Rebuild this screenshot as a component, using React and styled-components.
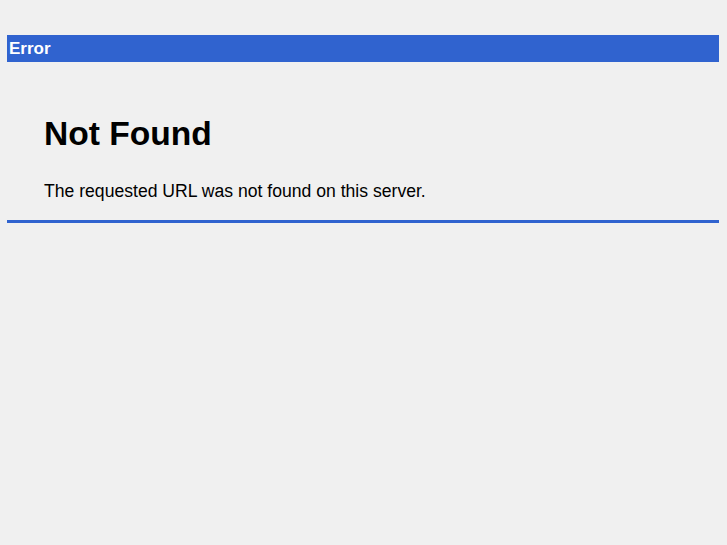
import React from 'react';
import styled, { createGlobalStyle } from 'styled-components';

const GlobalStyle = createGlobalStyle`
  html, body {
    margin: 0;
    padding: 0;
    background: #f0f0f0;
  }
  body {
    font-family: "Liberation Sans", Arial, sans-serif;
    color: #000;
  }
`;

const Page = styled.div`
  padding: 35px 8px 0 7px;
`;

const TitleBar = styled.div`
  height: 27px;
  background: #3063cf;
  color: #fff;
  font-size: 17px;
  font-weight: bold;
  line-height: 27px;
  padding-left: 2px;
`;

const Content = styled.div`
  padding: 0 0 0 37px;
`;

const Heading = styled.h1`
  margin: 52px 0 0;
  font-size: 33.6px;
  font-weight: bold;
  line-height: 40px;
`;

const Message = styled.p`
  margin: 26px 0 0;
  font-size: 17.6px;
  line-height: 22px;
`;

const Rule = styled.div`
  margin-top: 18px;
  height: 3px;
  background: #3063cf;
`;

const App = () => (
  <>
    <GlobalStyle />
    <Page>
      <TitleBar>Error</TitleBar>
      <Content>
        <Heading>Not Found</Heading>
        <Message>The requested URL was not found on this server.</Message>
      </Content>
      <Rule />
    </Page>
  </>
);

export default App;
